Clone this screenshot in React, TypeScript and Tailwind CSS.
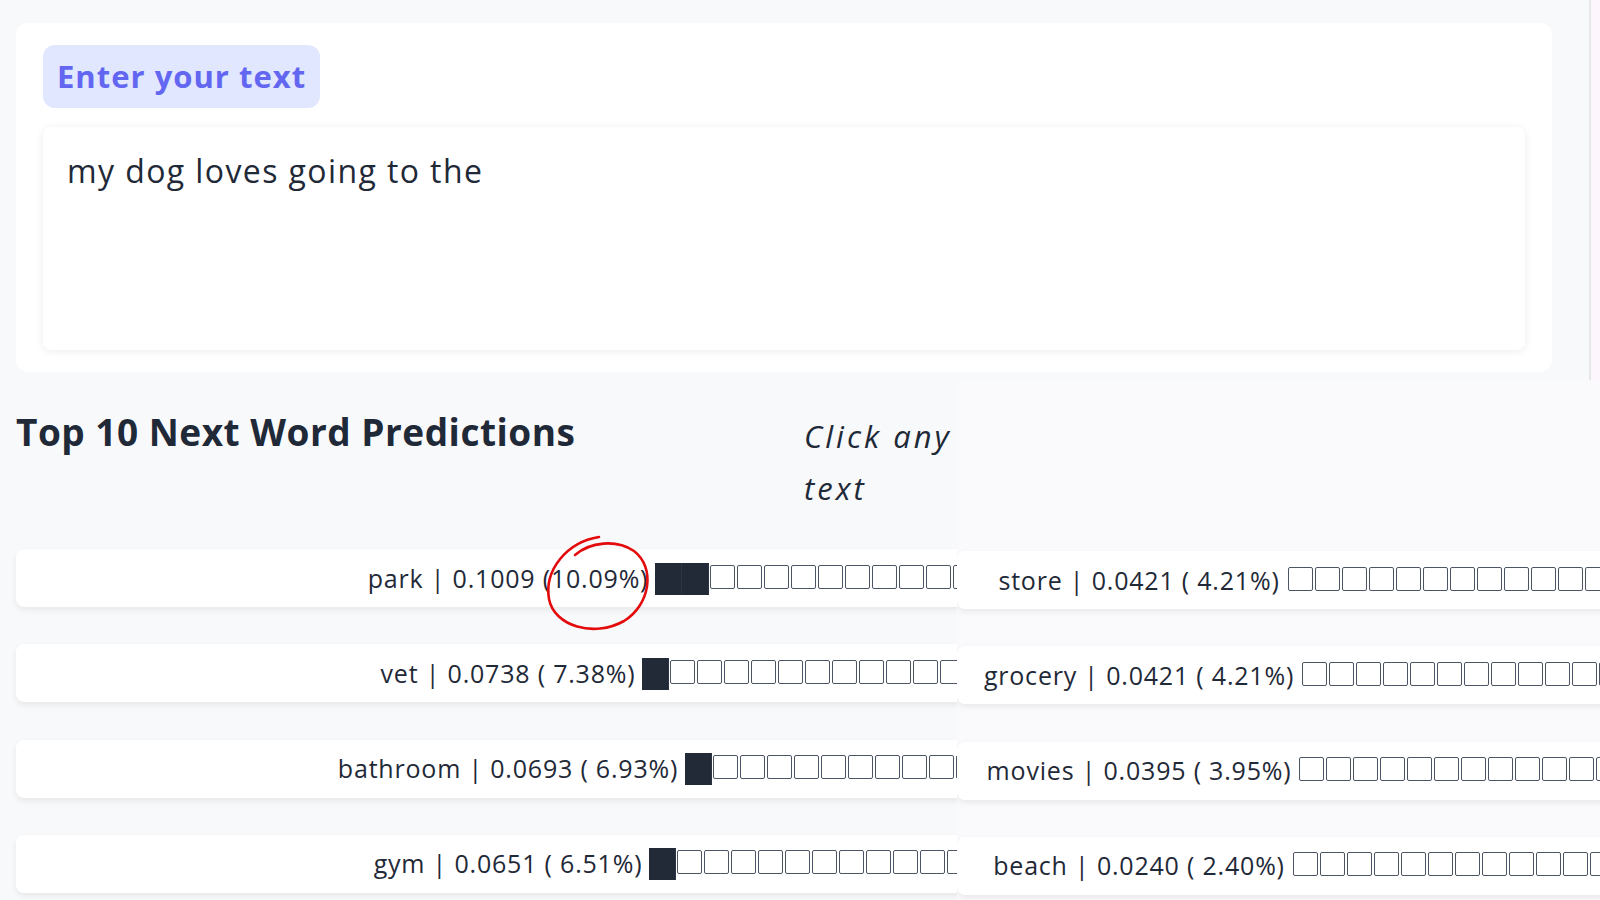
import React from "react";

type Pred = { word: string; p: string; pct: string; filled: number };

const left: Pred[] = [
  { word: "park", p: "0.1009", pct: "(10.09%)", filled: 2 },
  { word: "vet", p: "0.0738", pct: "( 7.38%)", filled: 1 },
  { word: "bathroom", p: "0.0693", pct: "( 6.93%)", filled: 1 },
  { word: "gym", p: "0.0651", pct: "( 6.51%)", filled: 1 },
];
const right: Pred[] = [
  { word: "store", p: "0.0421", pct: "( 4.21%)", filled: 0 },
  { word: "grocery", p: "0.0421", pct: "( 4.21%)", filled: 0 },
  { word: "movies", p: "0.0395", pct: "( 3.95%)", filled: 0 },
  { word: "beach", p: "0.0240", pct: "( 2.40%)", filled: 0 },
];

function Bar({ filled }: { filled: number }) {
  const boxes = [];
  for (let i = 0; i < 20; i++) {
    if (i < filled) {
      boxes.push(
        <span key={i} className="block w-[27px] h-[32px] bg-[#222a38] border-r border-[#2c3545] shrink-0" />
      );
    } else {
      boxes.push(
        <span key={i} className="flex w-[27px] h-[32px] shrink-0 items-start pt-[2px] pl-[1px]">
          <span className="block w-[25px] h-[24px] border-[1.5px] border-[#4b5563] rounded-[2px]" />
        </span>
      );
    }
  }
  return <span className="flex items-start ml-[7px] mt-[1px]">{boxes}</span>;
}

function Row({ d, width, offset }: { d: Pred; width: string; offset: string }) {
  return (
    <div className={`${width} ${offset} h-[58px] shrink-0 bg-white rounded-lg shadow-[0_3px_6px_rgba(0,0,0,0.07)] flex items-center justify-center whitespace-nowrap`}>
      <span className="text-[25px] tracking-[0.8px] text-[#1f2937] leading-none">
        {d.word} | {d.p} {d.pct}
      </span>
      <Bar filled={d.filled} />
    </div>
  );
}

export default function App() {
  return (
    <div className="relative w-[1600px] h-[900px] overflow-hidden bg-[#f8f9fb] font-['Open_Sans',sans-serif] text-[#1f2937]">
      {/* top section */}
      <div className="flex h-[380px]">
        <div className="w-[1589px] pl-[16px] pr-[37px] pt-[23px]">
          <div className="bg-white rounded-xl h-[349px] px-[27px] pt-[22px]">
            <div className="inline-flex items-center h-[63px] px-[14px] rounded-xl bg-[#e0e7ff] text-[#6366f1] font-bold text-[31px] tracking-[1px] whitespace-nowrap">
              Enter your text
            </div>
            <div className="mt-[19px] h-[223px] bg-white rounded-lg shadow-[0_1px_8px_rgba(0,0,0,0.08)] px-[24px] pt-[21px] text-[32px] tracking-[1.4px] leading-[46px] text-[#1f2937]">
              my dog loves going to the
            </div>
          </div>
        </div>
        <div className="w-[2px] bg-[#e5e7eb]" />
        <div className="flex-1 bg-[#fdf6fd]" />
      </div>

      {/* bottom section */}
      <div className="flex">
        <div className="w-[957px] shrink-0 overflow-hidden">
          <div className="h-[169px] grid grid-cols-[804px_153px] items-start">
            <h2 className="pl-[16px] pt-[28px] text-[37px] font-bold tracking-[0.5px] leading-[48px] text-[#1f2937] whitespace-nowrap">
              Top 10 Next Word Predictions
            </h2>
            <p className="pt-[30px] italic text-[31px] tracking-[3px] leading-[52px] text-[#1f2937] whitespace-nowrap">
              Click any
              <br />
              text
            </p>
          </div>
          <div className="flex flex-col gap-[37.3px] pb-[40px]">
            {left.map((d) => (
              <Row key={d.word} d={d} width="w-[1531px]" offset="ml-[16px]" />
            ))}
          </div>
        </div>
        <div className="flex-1 overflow-hidden bg-[#fafafd]">
          <div className="h-[171px]" />
          <div className="flex flex-col gap-[37.3px] pb-[40px]">
            {right.map((d) => (
              <Row key={d.word} d={d} width="w-[911px]" offset="ml-0" />
            ))}
          </div>
        </div>
      </div>

      {/* hand-drawn annotation */}
      <svg className="absolute inset-0 pointer-events-none" width="1600" height="900" viewBox="0 0 1600 900">
        <path
          d="M599 537 C 567 542, 544 570, 549 599 C 554 626, 594 638, 624 621 C 650 605, 656 568, 634 551 C 616 539, 590 542, 575 555"
          fill="none"
          stroke="#e30b0b"
          strokeWidth="2.6"
          strokeLinecap="round"
        />
      </svg>
    </div>
  );
}
